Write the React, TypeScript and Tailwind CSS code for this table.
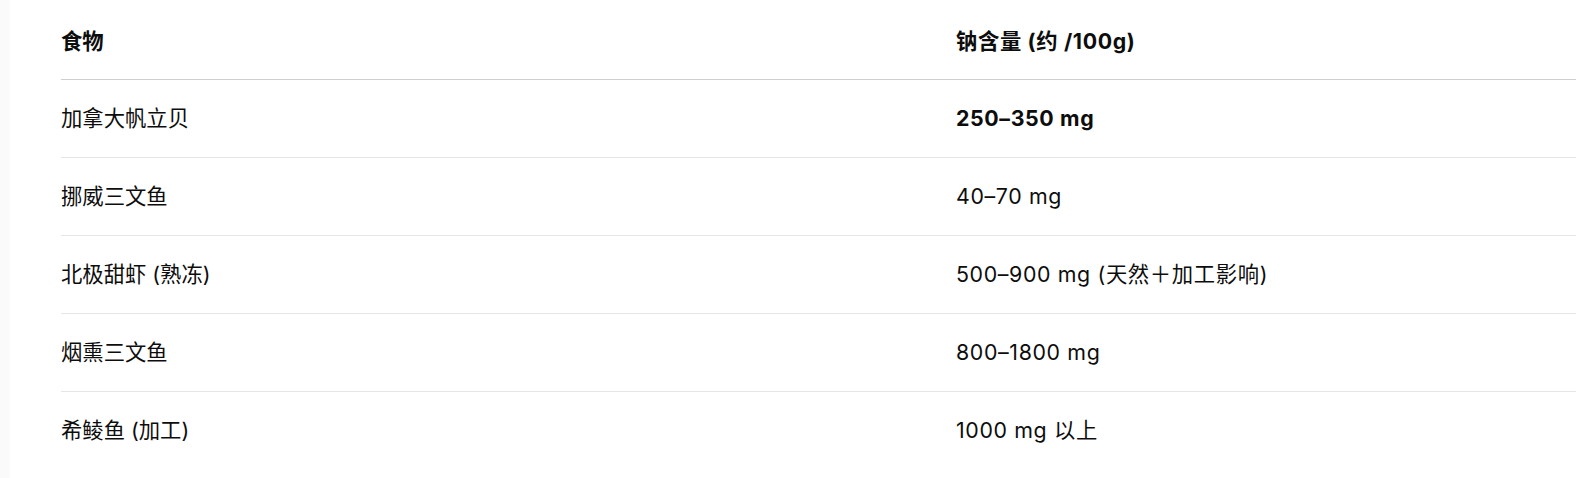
import React from "react";

const rows: { food: string; sodium: string; bold?: boolean }[] = [
  { food: "加拿大帆立贝", sodium: "250–350 mg", bold: true },
  { food: "挪威三文鱼", sodium: "40–70 mg" },
  { food: "北极甜虾 (熟冻)", sodium: "500–900 mg (天然＋加工影响)" },
  { food: "烟熏三文鱼", sodium: "800–1800 mg" },
  { food: "希鲮鱼 (加工)", sodium: "1000 mg 以上" },
];

export default function App() {
  return (
    <div
      className="flex h-[478px] w-[1576px] overflow-hidden bg-white text-[21.33px] text-[#0d0d0d]"
      style={{ fontFamily: '"Inter", "Noto Sans CJK SC", sans-serif' }}
    >
      <div className="w-[10px] shrink-0 bg-[#fafafa]" />
      <div className="ml-[51px] flex flex-1 flex-col pt-[4px]">
        <div className="grid h-[76px] grid-cols-[895px_1fr] items-center border-b border-[#cfcfcf] font-bold">
          <div>食物</div>
          <div className="tracking-[0.03em]">钠含量 (约 /100g)</div>
        </div>
        {rows.map((r, i) => (
          <div
            key={i}
            className={`grid h-[78px] grid-cols-[895px_1fr] items-center ${
              i < rows.length - 1 ? "border-b border-[#e5e5e5]" : ""
            }`}
          >
            <div>{r.food}</div>
            <div className={r.bold ? "font-bold tracking-[0.03em]" : "tracking-[0.03em]"}>{r.sodium}</div>
          </div>
        ))}
      </div>
    </div>
  );
}
